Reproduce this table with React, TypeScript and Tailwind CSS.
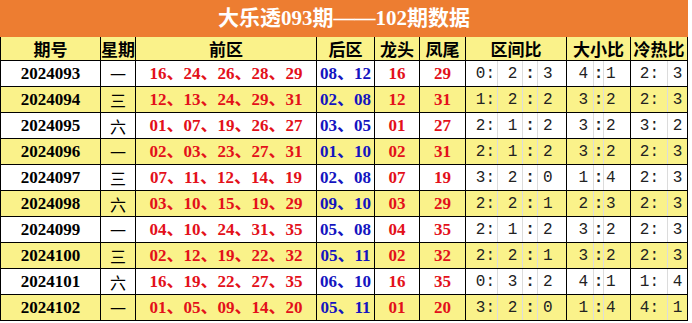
type Row = {
  issue: string;
  day: string;
  front: string[];
  back: string[];
  head: string;
  tail: string;
  zone: [string, string, string];
  size: [string, string];
  heat: [string, string];
};

const rows: Row[] = [
  { issue: "2024093", day: "一", front: ["16", "24", "26", "28", "29"], back: ["08", "12"], head: "16", tail: "29", zone: ["0", "2", "3"], size: ["4", "1"], heat: ["2", "3"] },
  { issue: "2024094", day: "三", front: ["12", "13", "24", "29", "31"], back: ["02", "08"], head: "12", tail: "31", zone: ["1", "2", "2"], size: ["3", "2"], heat: ["2", "3"] },
  { issue: "2024095", day: "六", front: ["01", "07", "19", "26", "27"], back: ["03", "05"], head: "01", tail: "27", zone: ["2", "1", "2"], size: ["3", "2"], heat: ["3", "2"] },
  { issue: "2024096", day: "一", front: ["02", "03", "23", "27", "31"], back: ["01", "10"], head: "02", tail: "31", zone: ["2", "1", "2"], size: ["3", "2"], heat: ["2", "3"] },
  { issue: "2024097", day: "三", front: ["07", "11", "12", "14", "19"], back: ["02", "08"], head: "07", tail: "19", zone: ["3", "2", "0"], size: ["1", "4"], heat: ["2", "3"] },
  { issue: "2024098", day: "六", front: ["03", "10", "15", "19", "29"], back: ["09", "10"], head: "03", tail: "29", zone: ["2", "2", "1"], size: ["2", "3"], heat: ["2", "3"] },
  { issue: "2024099", day: "一", front: ["04", "10", "24", "31", "35"], back: ["05", "08"], head: "04", tail: "35", zone: ["2", "1", "2"], size: ["3", "2"], heat: ["2", "3"] },
  { issue: "2024100", day: "三", front: ["02", "12", "19", "22", "32"], back: ["05", "11"], head: "02", tail: "32", zone: ["2", "2", "1"], size: ["3", "2"], heat: ["2", "3"] },
  { issue: "2024101", day: "六", front: ["16", "19", "22", "27", "35"], back: ["06", "10"], head: "16", tail: "35", zone: ["0", "3", "2"], size: ["4", "1"], heat: ["1", "4"] },
  { issue: "2024102", day: "一", front: ["01", "05", "09", "14", "20"], back: ["05", "11"], head: "01", tail: "20", zone: ["3", "2", "0"], size: ["1", "4"], heat: ["4", "1"] },
];

const grid = "grid grid-cols-[100px_35px_181px_58px_45px_46px_101px_64px_57px]";
const cell = "flex items-center justify-center border-r border-black";
const serif = "font-['Liberation_Serif','Noto_Sans_CJK_SC',serif]";
const cjk = "font-['Noto_Sans_CJK_SC','Liberation_Serif',sans-serif]";
const mono = "font-['Liberation_Mono','Noto_Sans_CJK_SC',monospace]";
const sub = "flex h-full items-center border-r border-[#dcdcdc]";

const headers = ["期号", "星期", "前区", "后区", "龙头", "凤尾", "区间比", "大小比", "冷热比"];

function DataRow({ row, yellow }: { row: Row; yellow: boolean }) {
  return (
    <div className={`${grid} h-[26px] border-b border-black ${yellow ? "bg-[#faf28a]" : "bg-white"} text-[17px] leading-none`}>
      <div className={`${cell} ${serif} font-bold text-black`}>{row.issue}</div>
      <div className={`${cell} ${cjk} text-[16px] font-normal text-black`}>{row.day}</div>
      <div className={`${cell} ${serif} font-bold text-[#e3101a]`}>{row.front.join("、")}</div>
      <div className={`${cell} ${serif} font-bold text-[#1414c0]`}>{row.back.join("、")}</div>
      <div className={`${cell} ${serif} font-bold text-[#e3101a]`}>{row.head}</div>
      <div className={`${cell} ${serif} font-bold text-[#e3101a]`}>{row.tail}</div>
      <div className={`flex border-r border-black ${mono} text-[16px] text-[#222]`}>
        <div className={`${sub} w-[32px] justify-end pr-[2px]`}>{row.zone[0]}:</div>
        <div className={`${sub} w-[25px] justify-center pl-[5px]`}>{row.zone[1]}</div>
        <div className={`${sub} w-[15px] justify-center font-bold`}>:</div>
        <div className="flex h-full flex-1 items-center pl-[5px]">{row.zone[2]}</div>
      </div>
      <div className={`flex border-r border-black ${mono} text-[16px] text-[#222]`}>
        <div className={`${sub} w-[27px] justify-end pr-[5px]`}>{row.size[0]}</div>
        <div className={`${sub} w-[10px] justify-center font-bold`}>:</div>
        <div className="flex h-full flex-1 items-center pl-[2px]">{row.size[1]}</div>
      </div>
      <div className={`flex border-r border-black ${mono} text-[16px] text-[#222]`}>
        <div className={`${sub} w-[37px] justify-end pr-[8px]`}>{row.heat[0]}:</div>
        <div className="flex h-full flex-1 items-center justify-center">{row.heat[1]}</div>
      </div>
    </div>
  );
}

export default function App() {
  return (
    <div className="h-[323px] w-[692px] overflow-hidden bg-white">
      <div className="w-[688px]">
        <div className={`flex h-[37px] items-center justify-center bg-[#ed7d31] ${serif} text-[21px] font-bold text-white`}>
          大乐透093期——102期数据
        </div>
        <div className="border-l border-black">
          <div className={`${grid} h-[24px] border-b border-black bg-[#faf28a] ${cjk} text-[17px] font-bold leading-none text-black`}>
            {headers.map((h) => (
              <div key={h} className={cell}>
                {h}
              </div>
            ))}
          </div>
          {rows.map((row, i) => (
            <DataRow key={row.issue} row={row} yellow={i % 2 === 1} />
          ))}
        </div>
      </div>
    </div>
  );
}
